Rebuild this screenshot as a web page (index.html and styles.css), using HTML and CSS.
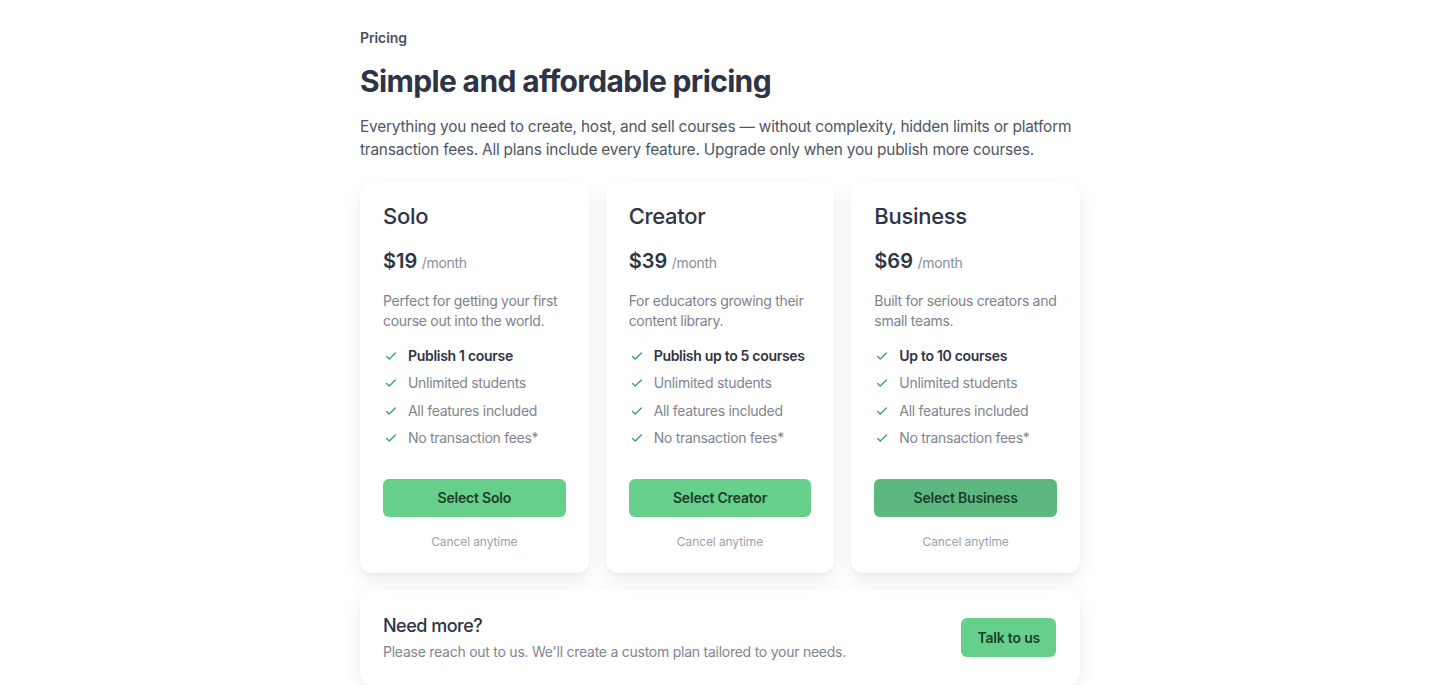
FILE: index.html
```html
<!DOCTYPE html>
<html lang="en">
<head>
    <meta charset="UTF-8">
    <meta name="viewport" content="width=device-width, initial-scale=1.0">
    <title>Pricing</title>
    <link rel="stylesheet" href="styles.css">
</head>
<body>
    <div class="container">
        <div class="eyebrow">Pricing</div>
        <h1>Simple and affordable pricing</h1>
        <p class="intro">Everything you need to create, host, and sell courses — without complexity, hidden limits or platform transaction fees. All plans include every feature. Upgrade only when you publish more courses.</p>

        <div class="plans">
            <div class="plan">
                <h2>Solo</h2>
                <div class="price"><span class="amount">$19</span> <span class="period">/month</span></div>
                <p class="desc">Perfect for getting your first course out into the world.</p>
                <ul class="features">
                    <li class="main"><svg viewBox="0 0 16 16"><path d="M3 8.5l3 3 7-7"/></svg>Publish 1 course</li>
                    <li><svg viewBox="0 0 16 16"><path d="M3 8.5l3 3 7-7"/></svg>Unlimited students</li>
                    <li><svg viewBox="0 0 16 16"><path d="M3 8.5l3 3 7-7"/></svg>All features included</li>
                    <li><svg viewBox="0 0 16 16"><path d="M3 8.5l3 3 7-7"/></svg>No transaction fees*</li>
                </ul>
                <button class="btn">Select Solo</button>
                <div class="cancel">Cancel anytime</div>
            </div>

            <div class="plan">
                <h2>Creator</h2>
                <div class="price"><span class="amount">$39</span> <span class="period">/month</span></div>
                <p class="desc">For educators growing their content library.</p>
                <ul class="features">
                    <li class="main"><svg viewBox="0 0 16 16"><path d="M3 8.5l3 3 7-7"/></svg>Publish up to 5 courses</li>
                    <li><svg viewBox="0 0 16 16"><path d="M3 8.5l3 3 7-7"/></svg>Unlimited students</li>
                    <li><svg viewBox="0 0 16 16"><path d="M3 8.5l3 3 7-7"/></svg>All features included</li>
                    <li><svg viewBox="0 0 16 16"><path d="M3 8.5l3 3 7-7"/></svg>No transaction fees*</li>
                </ul>
                <button class="btn">Select Creator</button>
                <div class="cancel">Cancel anytime</div>
            </div>

            <div class="plan">
                <h2>Business</h2>
                <div class="price"><span class="amount">$69</span> <span class="period">/month</span></div>
                <p class="desc">Built for serious creators and small teams.</p>
                <ul class="features">
                    <li class="main"><svg viewBox="0 0 16 16"><path d="M3 8.5l3 3 7-7"/></svg>Up to 10 courses</li>
                    <li><svg viewBox="0 0 16 16"><path d="M3 8.5l3 3 7-7"/></svg>Unlimited students</li>
                    <li><svg viewBox="0 0 16 16"><path d="M3 8.5l3 3 7-7"/></svg>All features included</li>
                    <li><svg viewBox="0 0 16 16"><path d="M3 8.5l3 3 7-7"/></svg>No transaction fees*</li>
                </ul>
                <button class="btn btn-active">Select Business</button>
                <div class="cancel">Cancel anytime</div>
            </div>
        </div>

        <div class="more">
            <div>
                <h3>Need more?</h3>
                <p>Please reach out to us. We'll create a custom plan tailored to your needs.</p>
            </div>
            <button class="btn btn-small">Talk to us</button>
        </div>
    </div>
</body>
</html>
```

FILE: styles.css
```css
body {
    margin: 0;
    font-family: Inter, "Noto Sans", Arial, sans-serif;
    background-color: #ffffff;
    color: #2d3748;
}

.container {
    width: 720px;
    margin: 0 auto;
    padding-top: 28px;
}

.eyebrow {
    font-size: 14px;
    line-height: 20px;
    font-weight: 600;
    color: #4a4f5c;
    letter-spacing: -0.1px;
}

h1 {
    margin: 15px 0 0;
    font-size: 30px;
    line-height: 36px;
    font-weight: 700;
    color: #2e3445;
    letter-spacing: -0.65px;
}

.intro {
    margin: 16px 0 0;
    font-size: 15.4px;
    line-height: 23px;
    color: #4e5563;
    letter-spacing: -0.2px;
}

.plans {
    display: grid;
    grid-template-columns: repeat(3, 1fr);
    gap: 17px;
    margin-top: 21px;
}

.plan {
    background-color: #fff;
    border-radius: 12px;
    padding: 20px 23px 23px;
    box-shadow: 0 8px 20px rgba(0, 0, 0, 0.07), 0 2px 4px rgba(0, 0, 0, 0.03);
    display: flex;
    flex-direction: column;
}

h2 {
    margin: 0;
    font-size: 22px;
    line-height: 28px;
    font-weight: 500;
    color: #2e3445;
    letter-spacing: -0.3px;
}

.price {
    margin-top: 17px;
    line-height: 28px;
}

.amount {
    font-size: 20px;
    font-weight: 600;
    color: #2e3445;
}

.period {
    font-size: 14px;
    color: #8a8f99;
    letter-spacing: -0.3px;
}

.desc {
    margin: 14px 0 0;
    font-size: 14px;
    line-height: 20px;
    color: #7d828c;
    letter-spacing: -0.3px;
}

.features {
    list-style: none;
    padding: 0;
    margin: 15px 0 0;
    display: flex;
    flex-direction: column;
    gap: 7.3px;
}

.features li {
    display: flex;
    align-items: center;
    font-size: 14px;
    line-height: 20px;
    color: #80858f;
    letter-spacing: -0.3px;
}

.features li.main {
    font-weight: 600;
    color: #2e3445;
}

.features svg {
    width: 14px;
    height: 14px;
    margin: 0 10px 0 1px;
    fill: none;
    stroke: #38a169;
    stroke-width: 1.5;
    stroke-linecap: round;
    stroke-linejoin: round;
}

.btn {
    margin-top: 31px;
    height: 38px;
    border: none;
    border-radius: 6px;
    background-color: #67cf8c;
    color: #1c3d2b;
    font-family: inherit;
    font-size: 14px;
    font-weight: 600;
    letter-spacing: -0.2px;
    cursor: pointer;
}

.btn:hover,
.btn-active {
    background-color: #5cb87e;
}

.cancel {
    margin-top: 17px;
    text-align: center;
    font-size: 12px;
    line-height: 16px;
    color: #9ca1aa;
    letter-spacing: -0.1px;
}

.more {
    margin-top: 16px;
    background-color: #fff;
    border-radius: 12px;
    padding: 25px 24px 23px 23px;
    box-shadow: 0 8px 20px rgba(0, 0, 0, 0.07), 0 2px 4px rgba(0, 0, 0, 0.03);
    display: flex;
    align-items: center;
    justify-content: space-between;
}

h3 {
    margin: 0;
    font-size: 18px;
    line-height: 24px;
    font-weight: 500;
    color: #2e3445;
    letter-spacing: -0.5px;
}

.more p {
    margin: 4px 0 0;
    font-size: 14px;
    line-height: 20px;
    color: #80858f;
    letter-spacing: -0.25px;
}

.btn-small {
    margin-top: 0;
    height: 39px;
    padding: 0 16px;
}
```
